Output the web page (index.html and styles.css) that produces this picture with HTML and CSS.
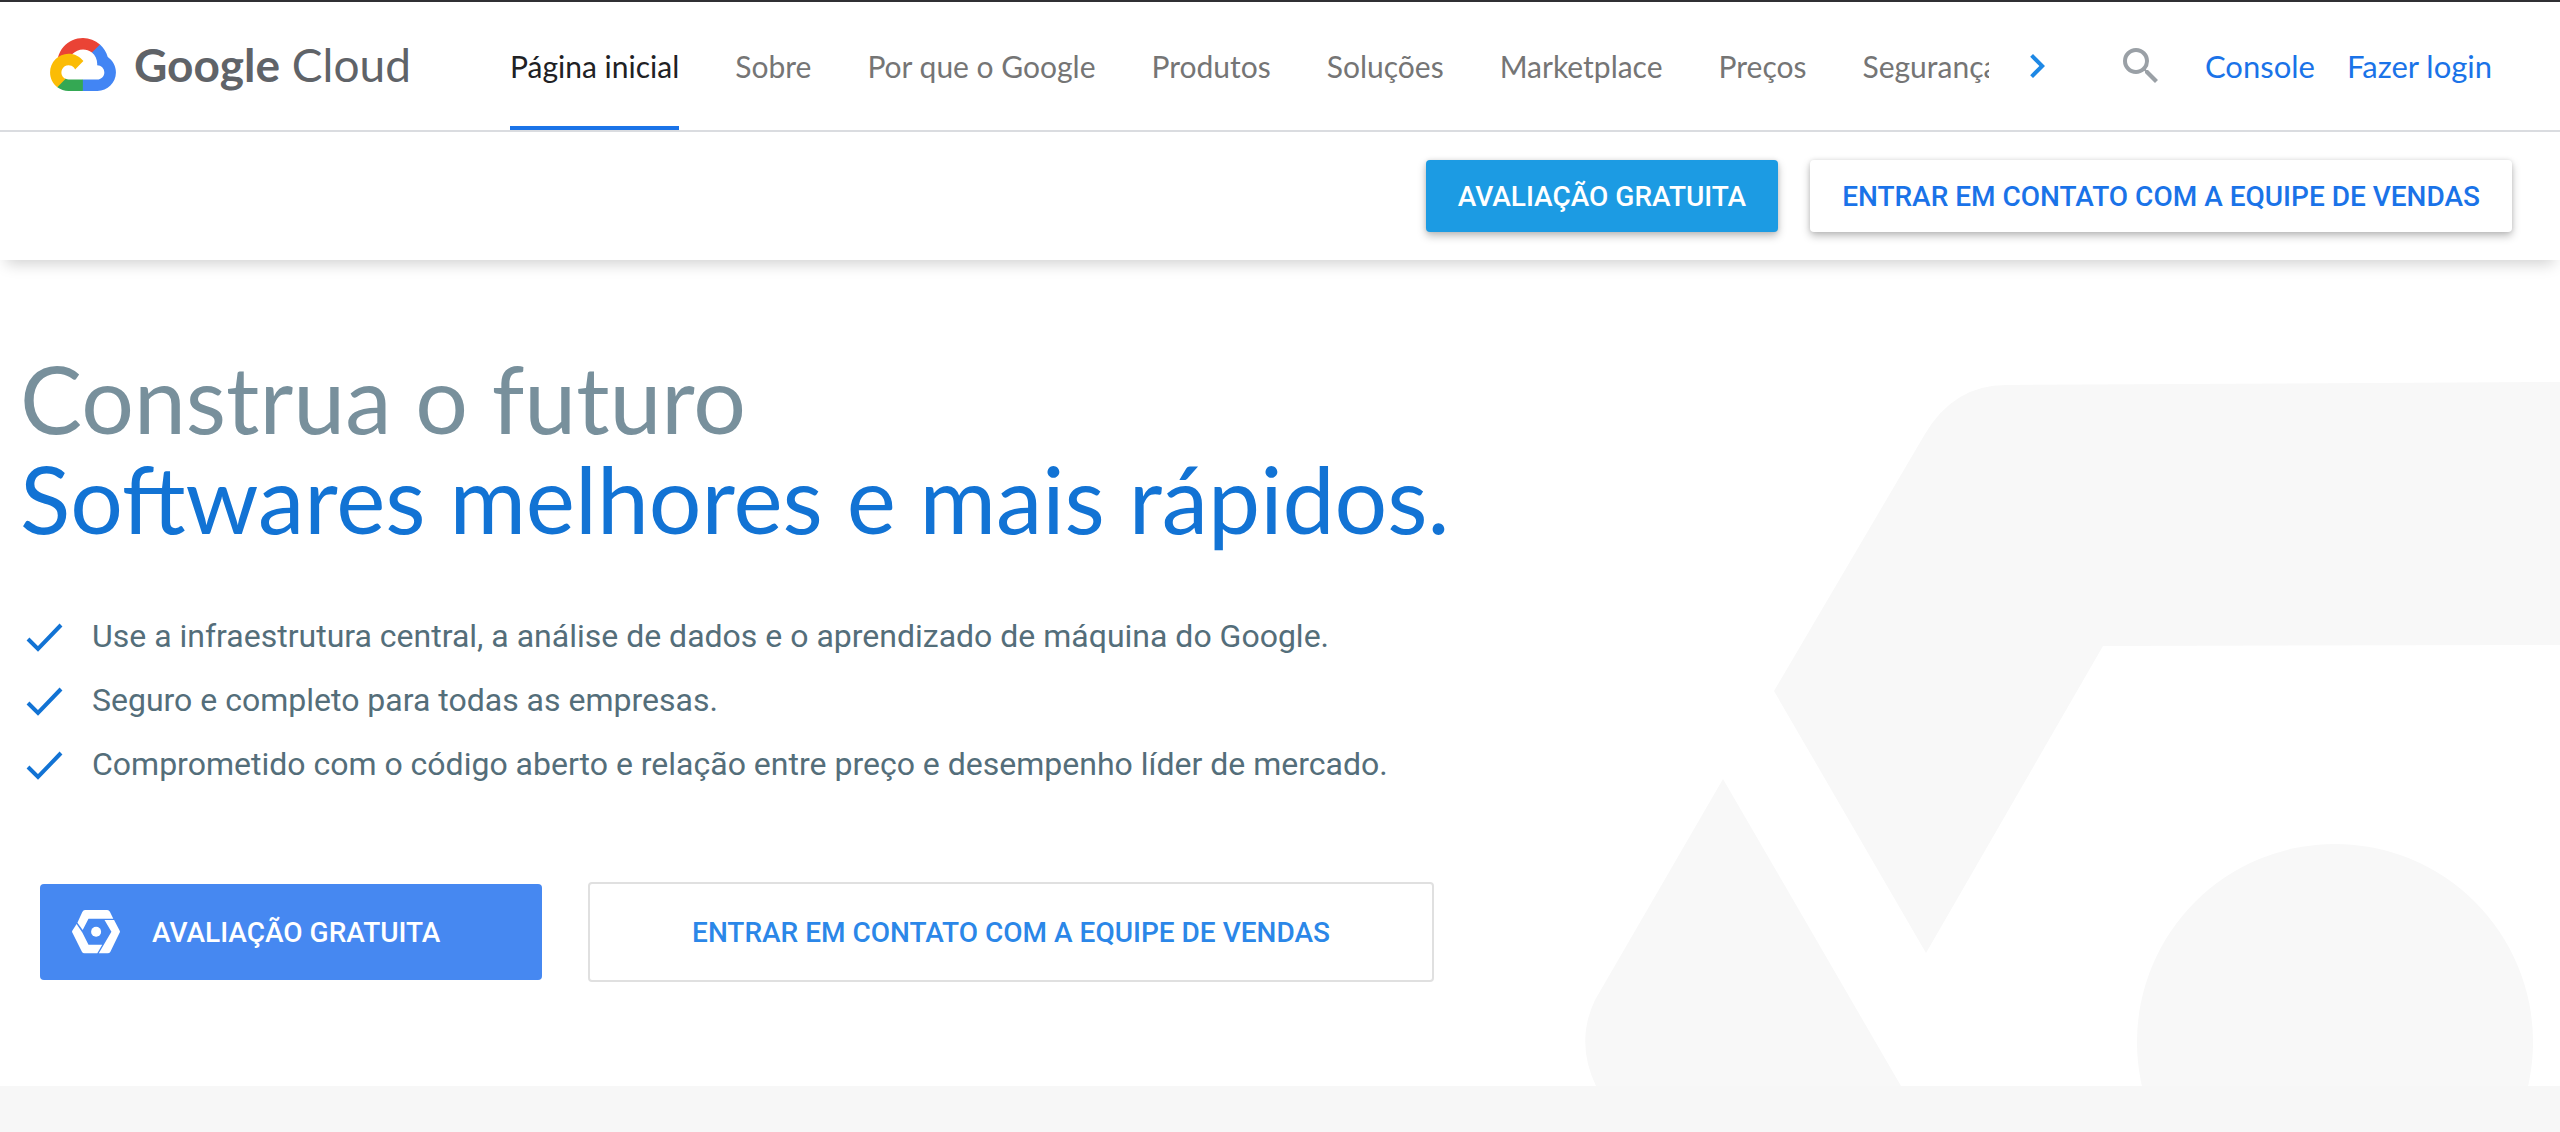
FILE: index.html
```html
<!DOCTYPE html>
<html lang="pt-BR">
<head>
<meta charset="utf-8">
<meta name="viewport" content="width=device-width, initial-scale=1">
<title>Google Cloud</title>
<link rel="stylesheet" href="styles.css">
</head>
<body>
<header class="site-header">
  <div class="top-row">
    <a class="logo" href="#">
      <svg class="logo-mark" viewBox="0 0 256 206" aria-hidden="true">
        <path fill="#ea4335" d="M170.25 56.82 192.5 34.57 193.99 25.2C153.44-11.68 88.98-7.5 52.42 33.92 42.27 45.42 34.73 59.76 30.72 74.57L38.69 73.45 83.19 66.11 86.63 62.6C106.42 40.85 139.9 37.93 162.76 56.43Z"/>
        <path fill="#4285f4" d="M224.2 73.92C219.09 55.08 208.59 38.15 193.99 25.2L162.76 56.43C175.94 67.2 183.46 83.44 183.13 100.47V106.01C198.49 106.01 210.93 118.45 210.93 133.81 210.93 149.16 198.49 161.29 183.13 161.29H127.46L122 167.22V200.56L127.46 205.8H183.13C223.06 206.11 255.69 174.3 256 134.37 256.19 110.17 244.25 87.48 224.2 73.92"/>
        <path fill="#34a853" d="M71.87 205.8H127.46V161.29H71.87C67.91 161.29 64.07 160.44 60.47 158.79L52.58 161.21 30.18 183.46 28.22 191.04C40.79 200.53 56.12 205.86 71.87 205.8"/>
        <path fill="#fbbc05" d="M71.87 61.43C31.94 61.66-.24 94.23 0 134.16 .13 156.46 10.55 177.45 28.22 191.04L60.47 158.79C46.48 152.47 40.26 136.01 46.58 122.02 52.9 108.03 69.37 101.81 83.36 108.13 89.52 110.91 94.46 115.85 97.25 122.02L129.49 89.77C115.77 71.83 94.45 61.34 71.87 61.43"/>
      </svg>
      <span class="logo-text"><b>Google</b> Cloud</span>
    </a>
    <nav class="main-nav">
      <a class="active" href="#" aria-current="page">Página inicial</a>
      <a href="#">Sobre</a>
      <a href="#">Por que o Google</a>
      <a href="#">Produtos</a>
      <a href="#">Soluções</a>
      <a href="#">Marketplace</a>
      <a href="#">Preços</a>
      <a href="#">Segurança</a>
    </nav>
    <div class="tools">
      <button class="icon-button next" type="button" aria-label="Próximo">
        <svg viewBox="0 0 24 24"><path d="M10 6 8.59 7.41 13.17 12l-4.58 4.59L10 18l6-6z"/></svg>
      </button>
      <button class="icon-button search" type="button" aria-label="Pesquisar">
        <svg viewBox="0 0 24 24"><path d="M15.5 14h-.79l-.28-.27A6.47 6.47 0 0 0 16 9.5 6.5 6.5 0 1 0 9.5 16c1.61 0 3.09-.59 4.23-1.57l.27.28v.79l5 4.99L20.49 19l-4.99-5zm-6 0C7.01 14 5 11.99 5 9.5S7.01 5 9.5 5 14 7.01 14 9.5 11.99 14 9.5 14z"/></svg>
      </button>
      <a href="#">Console</a>
      <a href="#">Fazer login</a>
    </div>
  </div>
  <div class="action-row">
    <button class="btn raised solid" type="button">AVALIAÇÃO GRATUITA</button>
    <button class="btn raised" type="button">ENTRAR EM CONTATO COM A EQUIPE DE VENDAS</button>
  </div>
</header>
<main>
  <section class="hero">
    <svg class="hero-art" viewBox="0 0 976 704" aria-hidden="true">
      <path d="M190 309 341 52Q370 3 422 3L976 0V263L519 264 342 571Z"/>
      <path d="M139 397 11 618Q-9 660 12 704H317Z"/>
      <circle cx="751" cy="660" r="198"/>
    </svg>
    <div class="hero-body">
      <h1><span>Construa o futuro</span> <em>Softwares melhores e mais rápidos.</em></h1>
      <ul class="benefits">
        <li><svg viewBox="0 0 48 48" aria-hidden="true"><path d="M8 27 18 37 41 13"/></svg>Use a infraestrutura central, a análise de dados e o aprendizado de máquina do Google.</li>
        <li><svg viewBox="0 0 48 48" aria-hidden="true"><path d="M8 27 18 37 41 13"/></svg>Seguro e completo para todas as empresas.</li>
        <li><svg viewBox="0 0 48 48" aria-hidden="true"><path d="M8 27 18 37 41 13"/></svg>Comprometido com o código aberto e relação entre preço e desempenho líder de mercado.</li>
      </ul>
      <div class="hero-actions">
        <button class="btn trial" type="button">
          <svg viewBox="0 0 48 44" aria-hidden="true">
            <path d="M5.4 12.7 10.3 2Q11.3 0 13 0H35.2Q37 0 37.9 1.7L41.3 8.7H16.5L10.7 20Z"/>
            <path d="M4.6 14 .3 20.8Q-.2 21.7.3 22.6L9.9 41.7Q10.7 43.3 12.6 43.3H25.3L30.2 34.7H16.5L10.3 22.6Z"/>
            <path d="M32.5 10H42.1L47.7 20.8Q48.2 21.7 47.7 22.6L38.4 41.7Q37.5 43.3 35.6 43.3H26.8L39.4 21.7Z"/>
            <circle cx="24.1" cy="21.7" r="5"/>
          </svg>
          AVALIAÇÃO GRATUITA
        </button>
        <button class="btn sales" type="button">ENTRAR EM CONTATO COM A EQUIPE DE VENDAS</button>
      </div>
    </div>
  </section>
</main>
</body>
</html>
```
FILE: styles.css
```css
* {
  box-sizing: border-box;
}

body {
  margin: 0;
  background: #f7f7f7;
  font-family: Roboto, sans-serif;
}

a {
  text-decoration: none;
}

button {
  font: inherit;
  cursor: pointer;
}

.site-header {
  position: relative;
  z-index: 1;
  background: #fff;
  border-top: 2px solid #303034;
  box-shadow: 0 10px 14px -6px rgba(0, 0, 0, 0.18);
}

.top-row {
  display: flex;
  height: 130px;
  padding: 0 68px 0 50px;
  border-bottom: 2px solid #dadce0;
  font-family: Lato, sans-serif;
  font-size: 30px;
}

.logo {
  flex: none;
  display: flex;
  align-items: center;
  gap: 18px;
  width: 460px;
  padding-bottom: 4px;
  color: #5f6368;
}

.logo-mark {
  width: 66px;
  height: 53px;
}

.logo-text {
  font-size: 46px;
}

.main-nav {
  flex: 1;
  min-width: 0;
  display: flex;
  gap: 56px;
  overflow: hidden;
  white-space: nowrap;
}

.main-nav a {
  flex: none;
  color: #757575;
  line-height: 128px;
}

.main-nav .active {
  color: #202124;
  box-shadow: inset 0 -4px #1a73e8;
}

.tools {
  flex: none;
  display: flex;
  align-items: center;
  padding-left: 24px;
  font-size: 31px;
}

.tools a {
  margin-left: 32px;
  color: #1a73e8;
  line-height: 128px;
}

.icon-button {
  width: 48px;
  height: 48px;
  padding: 0;
  border: 0;
  background: none;
}

.icon-button svg {
  display: block;
}

.next {
  margin-right: 56px;
  fill: #1e88e5;
}

.search {
  margin-right: 8px;
  fill: #9aa0a6;
}

.action-row {
  display: flex;
  align-items: center;
  justify-content: flex-end;
  gap: 32px;
  height: 128px;
  padding: 0 48px;
}

.btn {
  border: 0;
  border-radius: 4px;
  background: #fff;
  color: #1a73e8;
  font-size: 28px;
  font-weight: 500;
  white-space: nowrap;
}

.raised {
  height: 72px;
  padding: 0 32px;
  box-shadow: 0 4px 8px rgba(0, 0, 0, 0.26), 0 0 4px rgba(0, 0, 0, 0.1);
}

.solid {
  background: #1c9be3;
  color: #fff;
}

.hero {
  position: relative;
  overflow: hidden;
  padding: 88px 20px 104px;
  background: #fff;
}

.hero-art {
  position: absolute;
  right: 0;
  bottom: 0;
  width: 976px;
  height: 704px;
  fill: #f8f8f8;
}

.hero-body {
  position: relative;
}

h1 {
  margin: 0;
  color: #78909c;
  font: 400 93px/100px Lato, sans-serif;
}

h1 span,
h1 em {
  display: block;
  font-style: normal;
}

h1 em {
  color: #1273d4;
}

.benefits {
  margin: 56px 0 86px;
  padding: 0;
  list-style: none;
  color: #546e7a;
  font-size: 32px;
  line-height: 64px;
}

.benefits li {
  display: flex;
  align-items: center;
  gap: 24px;
}

.benefits svg {
  flex: none;
  width: 48px;
  height: 48px;
  fill: none;
  stroke: #1273d4;
  stroke-width: 4;
}

.hero-actions {
  display: flex;
  align-items: center;
  gap: 46px;
  padding-left: 20px;
}

.trial {
  display: flex;
  align-items: center;
  gap: 32px;
  width: 502px;
  height: 96px;
  padding: 0 32px;
  background: #4688f1;
  color: #fff;
}

.trial svg {
  width: 48px;
  height: 44px;
  fill: #fff;
}

.sales {
  width: 846px;
  height: 100px;
  border: 2px solid #e0e0e0;
  color: #2b87e8;
}
```
